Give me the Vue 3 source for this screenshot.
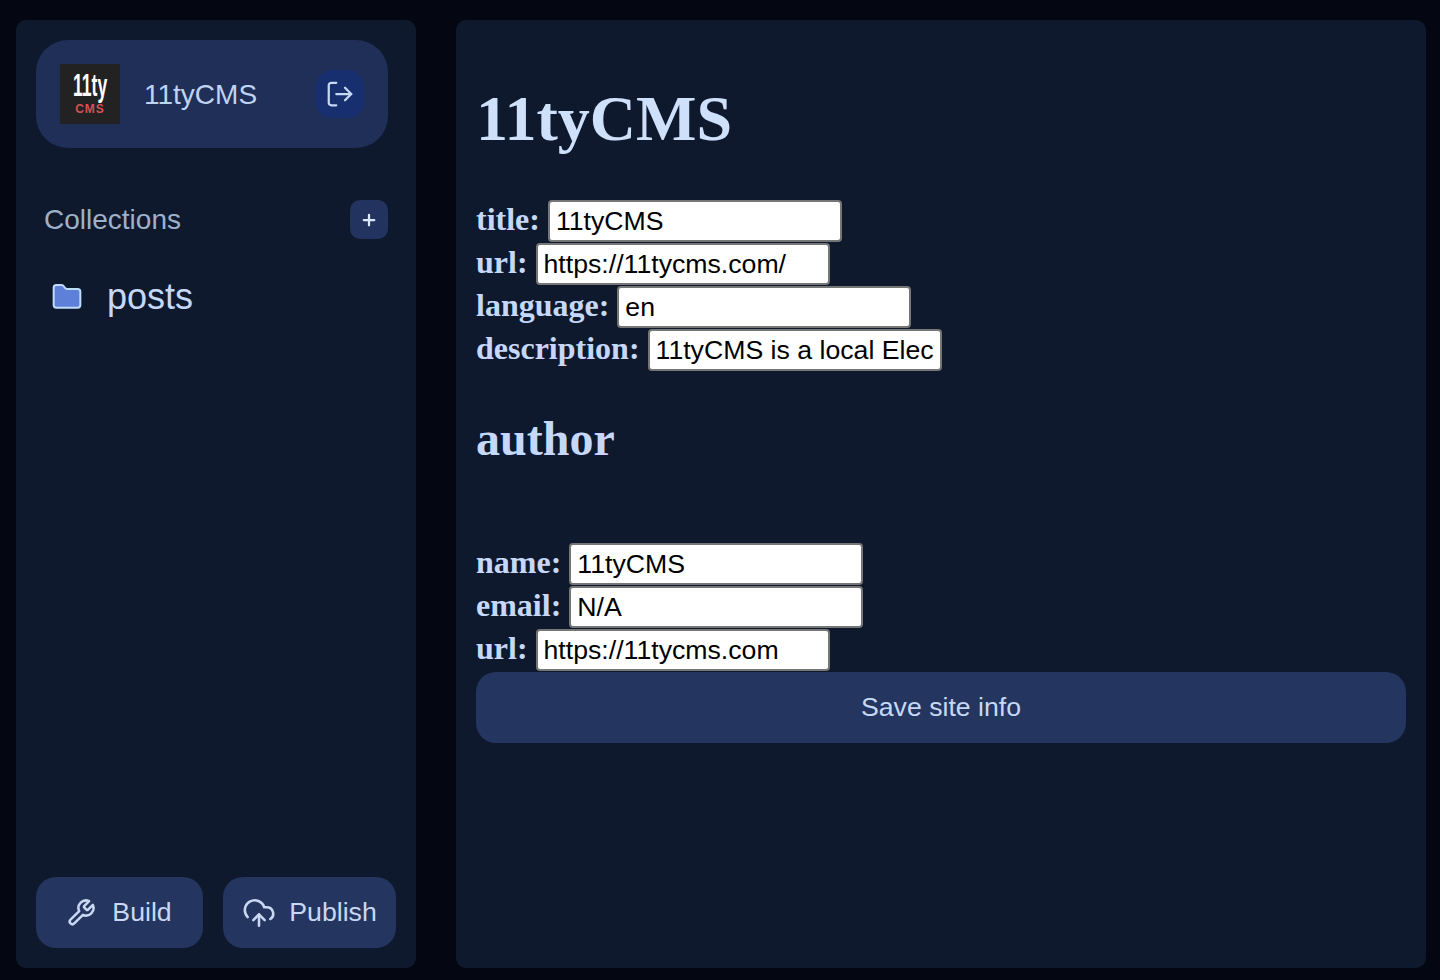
<script setup>
const site = [
  { label: 'title', value: '11tyCMS' },
  { label: 'url', value: 'https://11tycms.com/' },
  { label: 'language', value: 'en' },
  { label: 'description', value: '11tyCMS is a local Electron-based CMS' },
]
const author = [
  { label: 'name', value: '11tyCMS' },
  { label: 'email', value: 'N/A' },
  { label: 'url', value: 'https://11tycms.com' },
]
</script>

<template>
  <div class="page">
    <aside class="sidebar">
      <div class="brand">
        <div class="logo">
          <span class="logo-top">11ty</span>
          <span class="logo-bottom">CMS</span>
        </div>
        <span class="brand-name">11tyCMS</span>
        <button class="logout" aria-label="Exit">
          <svg viewBox="0 0 24 24" width="30" height="30" fill="none" stroke="currentColor" stroke-width="1.8" stroke-linecap="round" stroke-linejoin="round">
            <path d="M9 21H5a2 2 0 0 1-2-2V5a2 2 0 0 1 2-2h4" />
            <path d="m16 17 5-5-5-5" />
            <path d="M21 12H9" />
          </svg>
        </button>
      </div>

      <div class="collections-head">
        <span>Collections</span>
        <button class="add" aria-label="Add collection">
          <svg viewBox="0 0 24 24" width="18" height="18" fill="none" stroke="currentColor" stroke-width="3" stroke-linecap="round">
            <path d="M5 12h14" />
            <path d="M12 5v14" />
          </svg>
        </button>
      </div>

      <div class="collection">
        <svg viewBox="0 0 24 24" width="32" height="32" fill="#5f80d9" stroke="#bfdbfe" stroke-width="1.5" stroke-linejoin="round">
          <path d="M20 20a2 2 0 0 0 2-2V8a2 2 0 0 0-2-2h-7.9a2 2 0 0 1-1.69-.9L9.6 3.9A2 2 0 0 0 7.93 3H4a2 2 0 0 0-2 2v13a2 2 0 0 0 2 2Z" />
        </svg>
        <span>posts</span>
      </div>

      <div class="actions">
        <button class="action build">
          <svg viewBox="0 0 24 24" width="30" height="30" fill="none" stroke="currentColor" stroke-width="2" stroke-linecap="round" stroke-linejoin="round">
            <path d="M14.7 6.3a1 1 0 0 0 0 1.4l1.6 1.6a1 1 0 0 0 1.4 0l3.77-3.77a6 6 0 0 1-7.94 7.94l-6.91 6.91a2.12 2.12 0 0 1-3-3l6.91-6.91a6 6 0 0 1 7.94-7.94l-3.76 3.76z" />
          </svg>
          Build
        </button>
        <button class="action publish">
          <svg viewBox="0 0 24 24" width="34" height="34" fill="none" stroke="currentColor" stroke-width="1.8" stroke-linecap="round" stroke-linejoin="round">
            <path d="M12 13v8" />
            <path d="M4 14.899A7 7 0 1 1 15.71 8h1.79a4.5 4.5 0 0 1 2.5 8.242" />
            <path d="m8 17 4-4 4 4" />
          </svg>
          Publish
        </button>
      </div>
    </aside>

    <main class="content">
      <h1>11tyCMS</h1>
      <div class="fields">
        <template v-for="f in site" :key="f.label">
          <label>{{ f.label }}:</label>&#32;<input type="text" :value="f.value" /><br />
        </template>
      </div>
      <h2>author</h2>
      <div class="fields">
        <template v-for="f in author" :key="f.label">
          <label>{{ f.label }}:</label>&#32;<input type="text" :value="f.value" /><br />
        </template>
      </div>
      <button class="save">Save site info</button>
    </main>
  </div>
</template>

<style>
html,
body {
  margin: 0;
  background: #040711;
}
</style>

<style scoped>
.page {
  box-sizing: border-box;
  width: 1440px;
  height: 980px;
  display: flex;
  gap: 40px;
  padding: 20px 14px 12px 16px;
  background: #040711;
  font-family: "Liberation Sans", Arial, sans-serif;
  color: #c5d8f6;
  overflow: hidden;
}
button {
  border: 0;
  font-family: inherit;
  color: inherit;
  cursor: pointer;
}
.sidebar {
  box-sizing: border-box;
  width: 400px;
  flex: none;
  display: flex;
  flex-direction: column;
  padding: 20px 28px 20px 20px;
  background: #0f192d;
  border-radius: 10px;
}
.brand {
  display: flex;
  align-items: center;
  height: 108px;
  padding: 0 24px;
  background: #1f2f57;
  border-radius: 32px;
}
.logo {
  flex: none;
  width: 60px;
  height: 60px;
  display: flex;
  flex-direction: column;
  align-items: center;
  background: #222222;
  overflow: hidden;
}
.logo-top {
  margin-top: 6px;
  height: 30px;
  font-family: "Liberation Sans", sans-serif;
  font-size: 32px;
  font-weight: 700;
  line-height: 30px;
  color: #fff;
  transform: scaleX(0.55);
  white-space: nowrap;
}
.logo-bottom {
  margin-top: 2px;
  font-family: "Liberation Sans", sans-serif;
  font-size: 12px;
  font-weight: 700;
  line-height: 14px;
  letter-spacing: 1px;
  color: #d84f51;
}
.brand-name {
  flex: 1;
  margin-top: 2px;
  margin-left: 24px;
  font-size: 28px;
  color: #bfd3f2;
}
.logout {
  flex: none;
  width: 48px;
  height: 48px;
  display: flex;
  align-items: center;
  justify-content: center;
  padding: 0;
  background: #172f6f;
  border-radius: 16px;
}
.collections-head {
  display: flex;
  align-items: center;
  justify-content: space-between;
  height: 39px;
  margin-top: 52px;
  padding-left: 8px;
  font-size: 28px;
  color: #9fb0c9;
}
.add {
  width: 38px;
  height: 39px;
  display: flex;
  align-items: center;
  justify-content: center;
  padding: 0;
  background: #22335f;
  border-radius: 10px;
  color: #dbeafe;
}
.collection {
  display: flex;
  align-items: center;
  gap: 24px;
  margin-top: 36px;
  padding-left: 15px;
  font-size: 36px;
  line-height: 44px;
  color: #c5d8f6;
}
.actions {
  display: flex;
  gap: 20px;
  margin-top: auto;
  margin-right: -8px;
}
.action {
  height: 71px;
  display: flex;
  align-items: center;
  justify-content: center;
  padding: 0;
  background: #24355f;
  border-radius: 20px;
  font-size: 26.67px;
  color: #c8d8f2;
}
.build {
  width: 167px;
  gap: 16px;
}
.build svg {
  margin-left: -1px;
}
.publish {
  width: 173px;
  gap: 13px;
}
.content {
  box-sizing: border-box;
  width: 970px;
  flex: none;
  padding: 20px;
  background: #0f192d;
  border-radius: 10px;
  font-family: "Liberation Serif", "Times New Roman", serif;
  font-size: 32px;
  color: #c5d8fa;
}
h1 {
  margin: 43px 0 45px;
  font-size: 64px;
  line-height: 72px;
  font-weight: 700;
  color: #cfe0fb;
}
h2 {
  margin: 39px 0 76px;
  font-size: 48px;
  line-height: 56px;
  font-weight: 700;
}
label {
  font-weight: 700;
}
input {
  box-sizing: border-box;
  width: 294px;
  height: 42px;
  margin: 0 0 1px;
  padding: 2px 6px;
  border: 2px solid #767676;
  border-radius: 4px;
  background: #fff;
  color: #000;
  font-family: "Liberation Sans", Arial, sans-serif;
  font-size: 26.67px;
  vertical-align: baseline;
}
.save {
  display: block;
  width: 930px;
  height: 71px;
  background: #24355f;
  border-radius: 20px;
  font-family: "Liberation Sans", Arial, sans-serif;
  font-size: 26.67px;
  color: #c5d8f6;
}
</style>
